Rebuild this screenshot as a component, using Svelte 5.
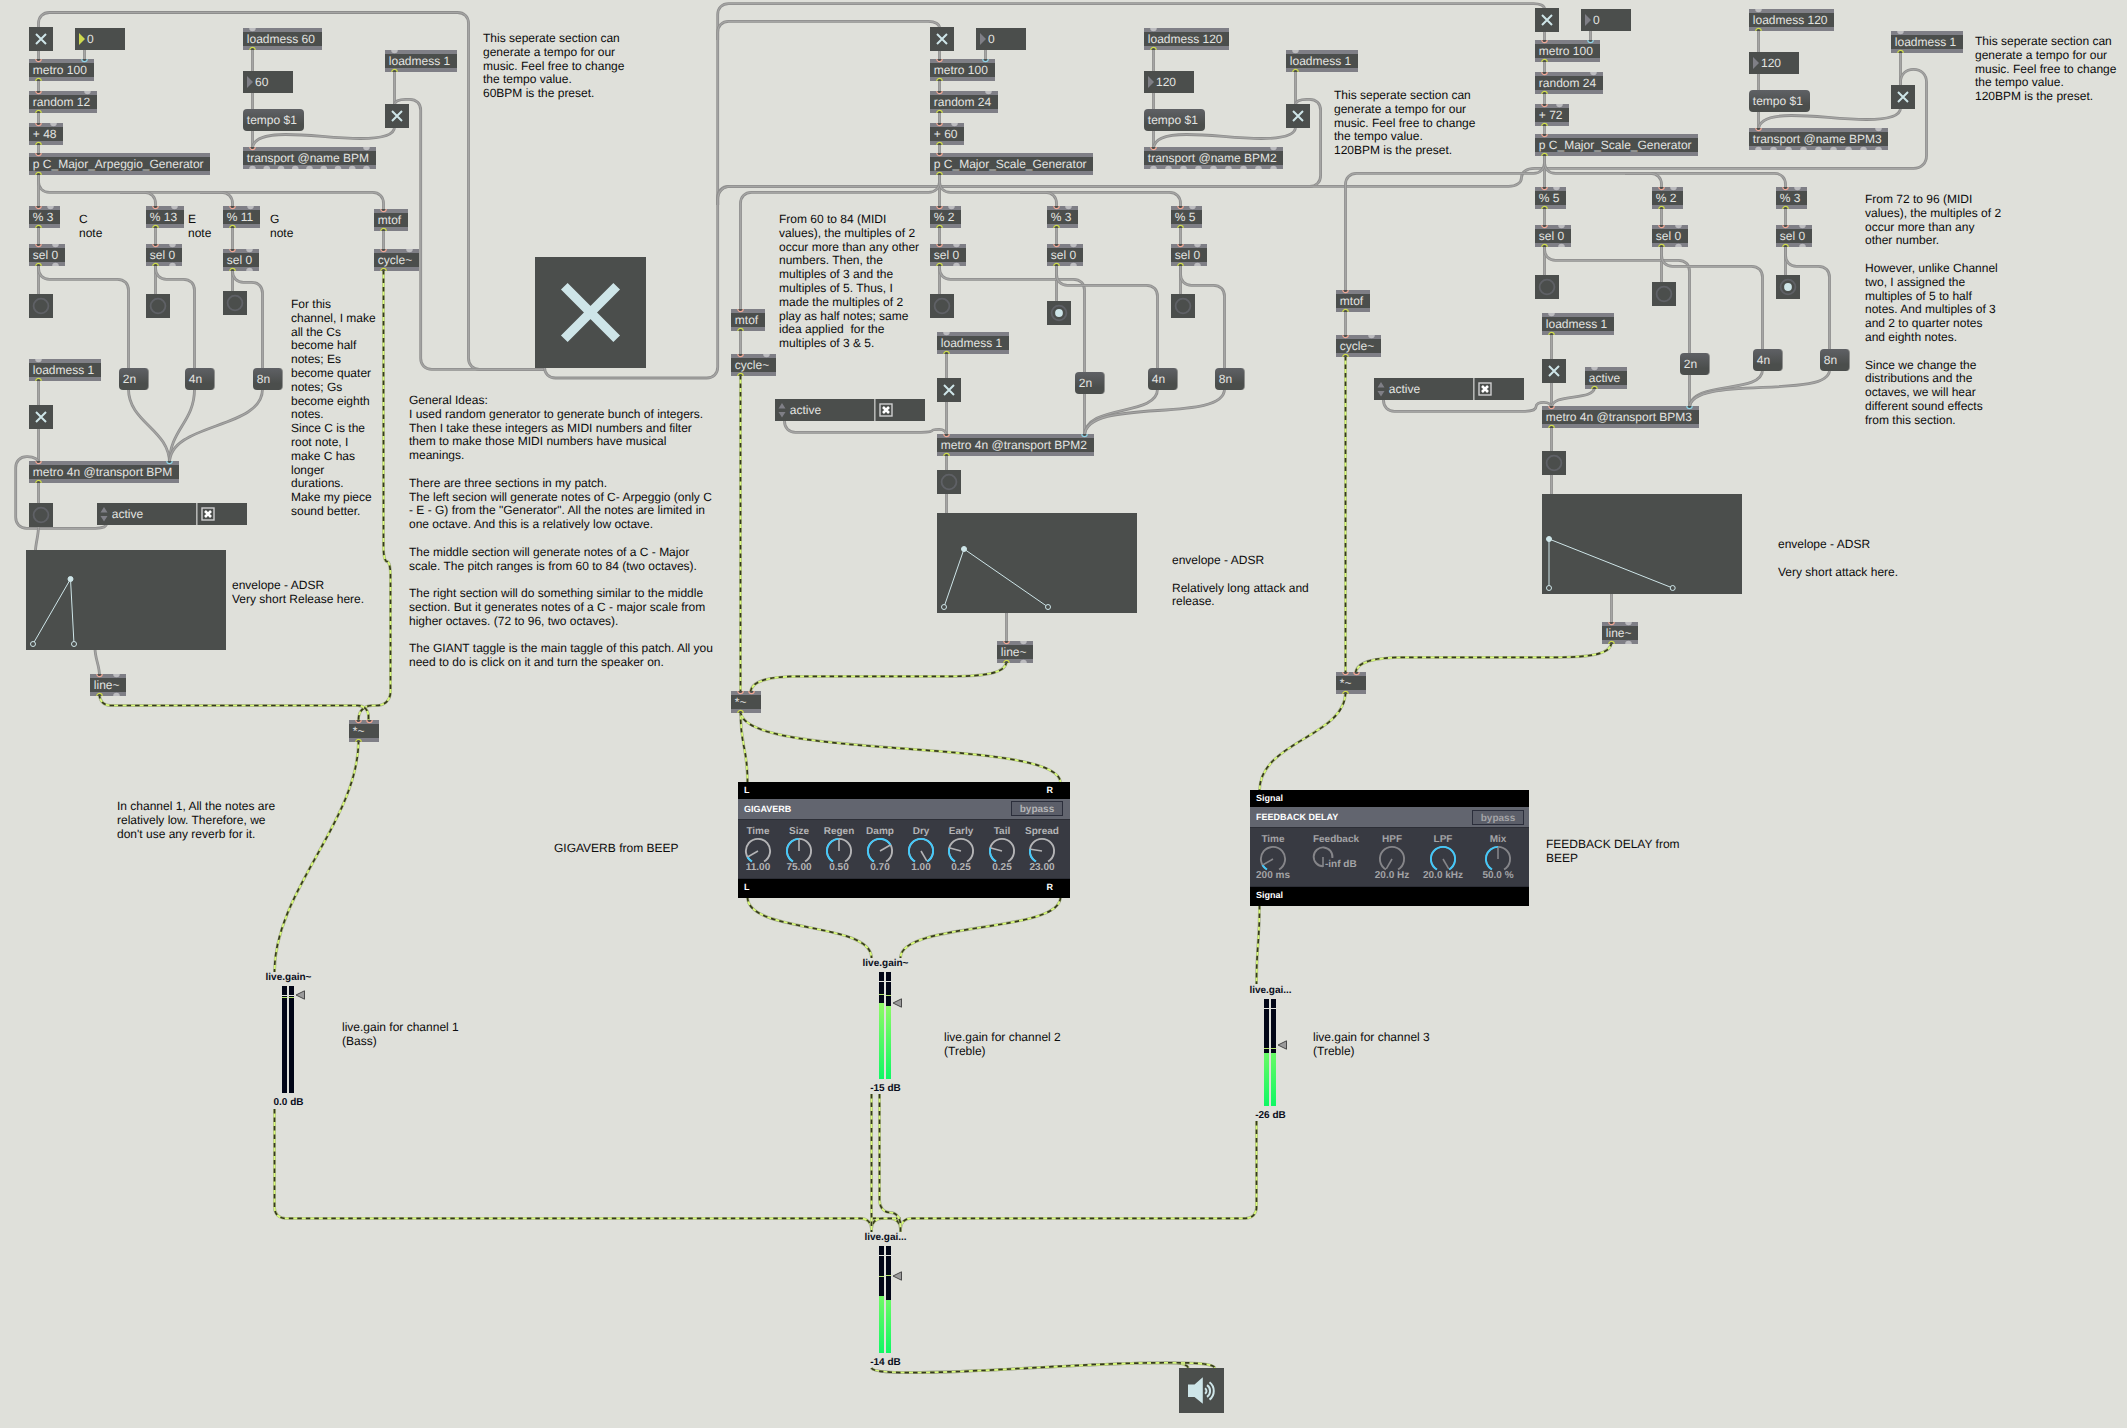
<script>
  // Patch cord: straight runs joined by rounded corners.
  function cord(points, radius = 11) {
    let d = `M${points[0][0]} ${points[0][1]}`;
    for (let k = 1; k < points.length - 1; k++) {
      const [ax, ay] = points[k - 1];
      const [bx, by] = points[k];
      const [cx, cy] = points[k + 1];
      const inLen = Math.hypot(bx - ax, by - ay);
      const outLen = Math.hypot(cx - bx, cy - by);
      const rin = Math.min(radius, k === 1 ? inLen : inLen / 2);
      const rout = Math.min(radius, k === points.length - 2 ? outLen : outLen / 2);
      const sx = bx - ((bx - ax) / inLen) * rin;
      const sy = by - ((by - ay) / inLen) * rin;
      const ex = bx + ((cx - bx) / outLen) * rout;
      const ey = by + ((cy - by) / outLen) * rout;
      const f = 0.6;
      d += ` L${sx} ${sy} C${sx + (bx - sx) * f} ${sy + (by - sy) * f} ${ex + (bx - ex) * f} ${ey + (by - ey) * f} ${ex} ${ey}`;
    }
    const last = points[points.length - 1];
    return d + ` L${last[0]} ${last[1]}`;
  }

  // Vertical S-shaped cord between an outlet and an inlet.
  function swing(x1, y1, x2, y2, a = 0.5, b = 0.5) {
    const h = y2 - y1;
    return `M${x1} ${y1} C${x1} ${y1 + h * a} ${x2} ${y2 - h * b} ${x2} ${y2}`;
  }

  const boxes = [];
  const toggles = [];
  const buttons = [];
  const numbers = [];
  const messages = [];
  const attrs = [];
  const cords = [];
  const signals = [];

  const box = (x, y, w, t, i, o) => boxes.push({ x, y, w, t, i, o });

  // The part every section shares: note generator plus tempo controls.
  function generator(x, y, name, nameW, range, offset) {
    toggles.push([x, y]);
    box(x, y + 32, 65, 'metro 100', 'rb', 'y');
    box(x, y + 64, 68, `random ${range}`, 'r.', 'y');
    box(x, y + 96, 34, `+ ${offset}`, 'r.', 'y');
    box(x, y + 126, nameW, name, 'r', 'y');
    cords.push(cord([[x + 9.5, y + 20], [x + 9.5, y + 130]]));
    cords.push(cord([[x + 55.5, y + 20], [x + 55.5, y + 34]]));
  }
  function tempo(x, y, load, loadW, bpm, bus, busW) {
    box(x, y, loadW, load, '.', 'y');
    numbers.push([x, y + 43, bpm, false]);
    messages.push([x, y + 81, 61, 'tempo $1']);
    box(x, y + 119, busW, `transport @name ${bus}`, 'r.', '.........');
    box(x + 142, y + 22, 72, 'loadmess 1', '.', 'y');
    toggles.push([x + 142, y + 76]);
    cords.push(cord([[x + 9.5, y + 20], [x + 9.5, y + 121]]));
    cords.push(cord([[x + 151.5, y + 42], [x + 151.5, y + 78]]));
    const a = x + 151.5;
    cords.push(
      `M${a} ${y + 99} C${a} ${y + 109} ${a - 18} ${y + 110.5} ${a - 34} ${y + 110.5} C${a - 62} ${y + 110.5} ${a - 82} ${y + 106.5} ${a - 109} ${y + 106.5} C${x + 25} ${y + 106.5} ${x + 9.5} ${y + 110} ${x + 9.5} ${y + 121}`
    );
  }
  function filter(x, y, t, w, selY, btnY, lit) {
    box(x, y, w, t, 'r.', 'y');
    box(x, selY, 36, 'sel 0', 'r.', 'y.');
    buttons.push([x, btnY, lit]);
    cords.push(cord([[x + 9.5, y + 20], [x + 9.5, btnY]]));
  }

  generator(29, 27, 'p C_Major_Arpeggio_Generator', 181, 12, 48);
  generator(930, 27, 'p C_Major_Scale_Generator', 163, 24, 60);
  generator(1535, 8, 'p C_Major_Scale_Generator', 163, 24, 72);
  numbers.push([75, 28, '0', true], [976, 28, '0', false], [1581, 9, '0', false]);
  tempo(243, 28, 'loadmess 60', 79, '60', 'BPM', 133);
  tempo(1144, 28, 'loadmess 120', 85, '120', 'BPM2', 139);
  tempo(1749, 9, 'loadmess 120', 85, '120', 'BPM3', 139);

  filter(29, 206, '% 3', 31, 244, 294, false);
  filter(146, 206, '% 13', 38, 244, 294, false);
  filter(223, 206, '% 11', 37, 249, 291, false);
  filter(930, 206, '% 2', 31, 244, 294, false);
  filter(1047, 206, '% 3', 31, 244, 301, true);
  filter(1171, 206, '% 5', 31, 244, 294, false);
  filter(1535, 187, '% 5', 31, 225, 275, false);
  filter(1652, 187, '% 2', 31, 225, 282, false);
  filter(1776, 187, '% 3', 31, 225, 275, true);

  box(374, 209, 34, 'mtof', 'r', 'y');
  box(374, 249, 45, 'cycle~', 'r.', 'y');
  box(731, 309, 34, 'mtof', 'r', 'y');
  box(731, 354, 45, 'cycle~', 'r.', 'y');
  box(1336, 290, 34, 'mtof', 'r', 'y');
  box(1336, 335, 45, 'cycle~', 'r.', 'y');

  box(29, 359, 72, 'loadmess 1', '.', 'y');
  box(29, 461, 150, 'metro 4n @transport BPM', 'rb', 'y');
  box(90, 674, 36, 'line~', 'r.', 'y.');
  box(349, 720, 30, '*~', 'rr', 'y');
  box(937, 332, 72, 'loadmess 1', '.', 'y');
  box(937, 434, 157, 'metro 4n @transport BPM2', 'rb', 'y');
  box(997, 641, 36, 'line~', 'r.', 'y.');
  box(731, 691, 30, '*~', 'rr', 'y');
  box(1542, 313, 72, 'loadmess 1', '.', 'y');
  box(1585, 367, 42, 'active', '.', 'y');
  box(1542, 406, 157, 'metro 4n @transport BPM3', 'rb', 'y');
  box(1602, 622, 36, 'line~', 'r.', 'y.');
  box(1336, 672, 30, '*~', 'rr', 'y');

  toggles.push([29, 405], [937, 378], [1542, 359]);
  buttons.push([29, 503, false], [937, 470, false], [1542, 451, false]);
  messages.push(
    [119, 368, 30, '2n'], [185, 368, 30, '4n'], [253, 368, 30, '8n'],
    [1075, 372, 30, '2n'], [1148, 368, 30, '4n'], [1215, 368, 30, '8n'],
    [1680, 353, 30, '2n'], [1753, 349, 30, '4n'], [1820, 349, 30, '8n']
  );
  attrs.push([97, 503], [775, 399], [1374, 378]);

  cords.push(
    // main toggle fan-out
    cord([[38.5, 28], [38.5, 12.5], [468.5, 12.5], [468.5, 369.3], [544, 369.3]]),
    cord([[394.5, 105], [394.5, 99.3], [420.7, 99.3], [420.7, 369.3], [544, 369.3]]),
    cord([[544.5, 366], [544.5, 378], [717.7, 378], [717.7, 3.6], [1544.5, 3.6], [1544.5, 9]]),
    cord([[717.7, 40], [717.7, 21.4], [939.5, 21.4], [939.5, 28]]),
    cord([[717.7, 205], [717.7, 186.4], [1320.6, 186.4], [1320.6, 99.3], [1295.5, 99.3], [1295.5, 105]]),
    cord([[717.7, 205], [717.7, 186.4], [1521.5, 186.4], [1521.5, 168.4], [1926.5, 168.4], [1926.5, 69.3], [1900.5, 69.3], [1900.5, 86]], 13),
    // generator outputs
    cord([[38.5, 173], [38.5, 192.4], [383.5, 192.4], [383.5, 211]]),
    cord([[120, 192.4], [155.5, 192.4], [155.5, 208]]),
    cord([[200, 192.4], [232.5, 192.4], [232.5, 208]]),
    cord([[38.5, 173], [38.5, 208]]),
    cord([[939.5, 173], [939.5, 208]]),
    cord([[939.5, 173], [939.5, 192.4], [740.5, 192.4], [740.5, 311]]),
    cord([[939.5, 173], [939.5, 192.4], [1180.5, 192.4], [1180.5, 208]]),
    cord([[1020, 192.4], [1056.5, 192.4], [1056.5, 208]]),
    cord([[1544.5, 154], [1544.5, 189]]),
    cord([[1544.5, 154], [1544.5, 173.4], [1345.5, 173.4], [1345.5, 292]]),
    cord([[1544.5, 154], [1544.5, 173.4], [1785.5, 173.4], [1785.5, 189]]),
    cord([[1625, 173.4], [1661.5, 173.4], [1661.5, 189]]),
    // matched notes to the duration messages
    cord([[38.5, 264], [38.5, 279.3], [128.5, 279.3], [128.5, 369]]),
    cord([[155.5, 264], [155.5, 279.3], [194.5, 279.3], [194.5, 369]]),
    cord([[232.5, 269], [232.5, 282.3], [262.5, 282.3], [262.5, 369]]),
    cord([[939.5, 264], [939.5, 279.3], [1084.5, 279.3], [1084.5, 436]]),
    cord([[1056.5, 264], [1056.5, 285.3], [1157.5, 285.3], [1157.5, 369]]),
    cord([[1180.5, 264], [1180.5, 285.3], [1224.5, 285.3], [1224.5, 369]]),
    cord([[1544.5, 245], [1544.5, 260.3], [1689.5, 260.3], [1689.5, 408]]),
    cord([[1661.5, 245], [1661.5, 266.3], [1762.5, 266.3], [1762.5, 350]]),
    cord([[1785.5, 245], [1785.5, 266.3], [1829.5, 266.3], [1829.5, 350]]),
    swing(128.5, 389, 169.5, 463, 0.45, 0.45),
    swing(194.5, 389, 169.5, 463, 0.45, 0.45),
    swing(262.5, 389, 169.5, 463, 0.55, 0.55),
    swing(1157.5, 389, 1084.5, 436, 0.6, 0.7),
    swing(1224.5, 389, 1084.5, 436, 0.75, 0.85),
    swing(1762.5, 370, 1689.5, 408, 0.65, 0.75),
    swing(1829.5, 370, 1689.5, 408, 0.8, 0.9),
    // mtof to cycle~
    cord([[383.5, 229], [383.5, 251]]),
    cord([[740.5, 329], [740.5, 356]]),
    cord([[1345.5, 310], [1345.5, 337]]),
    // rhythm columns
    cord([[38.5, 379], [38.5, 504]]),
    cord([[946.5, 352], [946.5, 514]]),
    cord([[1551.5, 333], [1551.5, 495]]),
    cord([[106.5, 524], [106.5, 528.3], [15.7, 528.3], [15.7, 456.7], [38.5, 456.7], [38.5, 463]]),
    cord([[784.5, 420], [784.5, 432.3], [932, 432.3], [932, 429.3], [946.5, 429.3], [946.5, 436]]),
    cord([[1383.5, 399], [1383.5, 411.3], [1536, 411.3], [1536, 402.3], [1551.5, 402.3], [1551.5, 408]]),
    'M1594.5 387 C1594.5 402 1551.5 392 1551.5 408',
    swing(38.5, 526, 35.5, 551, 0.4, 0.3),
    swing(95, 648, 99.5, 676, 0.4, 0.4),
    cord([[1006.5, 612], [1006.5, 643]]),
    cord([[1611.5, 593], [1611.5, 624]])
  );

  signals.push(
    cord([[383.5, 270], [383.5, 561.5], [390.5, 561.5], [390.5, 705.5], [358.5, 705.5], [358.5, 722]], 14),
    cord([[99.5, 694], [99.5, 705.5], [368.5, 705.5], [368.5, 722]]),
    cord([[740.5, 375], [740.5, 693]]),
    'M1006.5 661 C1006.5 672 990 676.3 950 676.3 H800 C768 676.3 750.5 681 750.5 693',
    cord([[1345.5, 356], [1345.5, 674]]),
    'M1611.5 642 C1611.5 653 1595 657.3 1555 657.3 H1405 C1373 657.3 1355.5 662 1355.5 674',
    swing(740.5, 711, 747.5, 783),
    swing(740.5, 711, 1060.5, 783, 0.7, 0.65),
    swing(1345.5, 692, 1259.5, 791, 0.45, 0.5),
    swing(358.5, 740, 274.5, 972, 0.35, 0.35),
    swing(747.5, 897, 871.5, 958, 0.6, 0.6),
    swing(1060.5, 897, 900.5, 958, 0.6, 0.6),
    swing(1259.5, 905, 1256.5, 984),
    cord([[274.5, 1109], [274.5, 1218.3], [871.5, 1218.3], [871.5, 1232]]),
    cord([[871.5, 1218.3], [900.5, 1218.3], [900.5, 1232]]),
    cord([[1256.5, 1121], [1256.5, 1218.3], [900.5, 1218.3], [900.5, 1232]]),
    cord([[900.5, 1218.3], [871.5, 1218.3], [871.5, 1232]]),
    cord([[871.5, 1094], [871.5, 1232]]),
    cord([[879.5, 1094], [879.5, 1212.5], [900.5, 1212.5], [900.5, 1232]], 13),
    'M871.5 1368 C874 1374 920 1373 960 1371.5 C1040 1368 1100 1363 1160 1362.8 C1176 1362.5 1186 1363 1188.5 1368',
    'M871.5 1368 C874 1374 920 1373 960 1371.5 C1040 1368 1100 1363 1160 1362.8 C1190 1362.5 1213 1363 1215 1368'
  );

  const envelopes = [
    { x: 26, y: 550, pts: [[7, 94], [44.5, 29], [48, 94]] },
    { x: 937, y: 513, pts: [[7, 94], [27, 36], [111, 94]] },
    { x: 1542, y: 494, pts: [[7, 94], [7, 45], [130.7, 94]] }
  ];

  // x and first baseline of each comment
  const comments = [
    [483, 42, 'This seperate section can\ngenerate a tempo for our\nmusic. Feel free to change\nthe tempo value.\n60BPM is the preset.'],
    [1334, 99, 'This seperate section can\ngenerate a tempo for our\nmusic. Feel free to change\nthe tempo value.\n120BPM is the preset.'],
    [1975, 45, 'This seperate section can\ngenerate a tempo for our\nmusic. Feel free to change\nthe tempo value.\n120BPM is the preset.'],
    [79, 223, 'C\nnote'],
    [188, 223, 'E\nnote'],
    [270, 223, 'G\nnote'],
    [291, 308, 'For this\nchannel, I make\nall the Cs\nbecome half\nnotes; Es\nbecome quater\nnotes; Gs\nbecome eighth\nnotes.\nSince C is the\nroot note, I\nmake C has\nlonger\ndurations.\nMake my piece\nsound better.'],
    [409, 404, 'General Ideas:\nI used random generator to generate bunch of integers.\nThen I take these integers as MIDI numbers and filter\nthem to make those MIDI numbers have musical\nmeanings.\n\nThere are three sections in my patch.\nThe left secion will generate notes of C- Arpeggio (only C\n- E - G) from the "Generator". All the notes are limited in\none octave. And this is a relatively low octave.\n\nThe middle section will generate notes of a C - Major\nscale. The pitch ranges is from 60 to 84 (two octaves).\n\nThe right section will do something similar to the middle\nsection. But it generates notes of a C - major scale from\nhigher octaves. (72 to 96, two octaves).\n\nThe GIANT taggle is the main taggle of this patch. All you\nneed to do is click on it and turn the speaker on.'],
    [779, 223, 'From 60 to 84 (MIDI\nvalues), the multiples of 2\noccur more than any other\nnumbers. Then, the\nmultiples of 3 and the\nmultiples of 5. Thus, I\nmade the multiples of 2\nplay as half notes; same\nidea applied  for the\nmultiples of 3 & 5.'],
    [1865, 203, 'From 72 to 96 (MIDI\nvalues), the multiples of 2\noccur more than any\nother number.\n\nHowever, unlike Channel\ntwo, I assigned the\nmultiples of 5 to half\nnotes. And multiples of 3\nand 2 to quarter notes\nand eighth notes.\n\nSince we change the\ndistributions and the\noctaves, we will hear\ndifferent sound effects\nfrom this section.'],
    [232, 589, 'envelope - ADSR\nVery short Release here.'],
    [1172, 564, 'envelope - ADSR\n\nRelatively long attack and\nrelease.'],
    [1778, 548, 'envelope - ADSR\n\nVery short attack here.'],
    [117, 810, "In channel 1, All the notes are\nrelatively low. Therefore, we\ndon't use any reverb for it."],
    [554, 852, 'GIGAVERB from BEEP'],
    [1546, 848, 'FEEDBACK DELAY from\nBEEP'],
    [342, 1031, 'live.gain for channel 1\n(Bass)'],
    [944, 1041, 'live.gain for channel 2\n(Treble)'],
    [1313, 1041, 'live.gain for channel 3\n(Treble)']
  ];

  // x of left bar, top of bars, peak and level offsets per bar
  const gains = [
    { x: 282, y: 986, name: 'live.gain~', db: '0.0 dB', tri: 9, peak: [11, 11], level: [107, 107] },
    { x: 879, y: 972, name: 'live.gain~', db: '-15 dB', tri: 31, peak: [22, 23], level: [31, 34] },
    { x: 1264, y: 999, name: 'live.gai...', db: '-26 dB', tri: 46, peak: [49, 49], level: [54, 54] },
    { x: 879, y: 1246, name: 'live.gai...', db: '-14 dB', tri: 30, peak: [30, 29], level: [50, 54] }
  ];

  const modules = [
    {
      x: 738, y: 782, w: 332, title: 'GIGAVERB', left: 'L', right: 'R', tone: 'bright', by: 273, byY: 19,
      dials: [
        ['Time', '11.00', 20, 0.1], ['Size', '75.00', 61, 0.5], ['Regen', '0.50', 101, 0.5], ['Damp', '0.70', 142, 0.7],
        ['Dry', '1.00', 183, 1], ['Early', '0.25', 223, 0.25], ['Tail', '0.25', 264, 0.25], ['Spread', '23.00', 304, 0.23]
      ]
    },
    {
      x: 1250, y: 790, w: 279, title: 'FEEDBACK DELAY', left: 'Signal', right: '', tone: 'dim', by: 222, byY: 20,
      dials: [
        ['Time', '200 ms', 23, 0.1], ['HPF', '20.0 Hz', 142, 0], ['LPF', '20.0 kHz', 193, 1], ['Mix', '50.0 %', 248, 0.5]
      ]
    }
  ];

  // Point on a dial; the sweep is 300 degrees, starting 30 degrees left of straight down.
  function at(cx, cy, r, v) {
    const a = ((120 + 300 * v) * Math.PI) / 180;
    return [cx + r * Math.cos(a), cy + r * Math.sin(a)];
  }
  function arc(cx, cy, r, from, to) {
    const [x1, y1] = at(cx, cy, r, from);
    const [x2, y2] = at(cx, cy, r, to);
    return `M${x1} ${y1} A${r} ${r} 0 ${(to - from) * 300 > 180 ? 1 : 0} 1 ${x2} ${y2}`;
  }
  const portX = (n, k, w) => (n === 1 ? 9.5 : 9.5 + (k * (w - 19)) / (n - 1));
</script>

<main class="patcher">
  <svg class="cords" width="2127" height="1428" viewBox="0 0 2127 1428">
    {#each cords as d}
      <path class="cord-edge" {d} />
      <path class="cord-core" {d} />
    {/each}
    {#each signals as d}
      <path class="sig-edge" {d} />
      <path class="sig-core" {d} />
      <path class="sig-dash" {d} />
    {/each}
  </svg>

  {#each comments as [x, y, text]}
    <p class="comment" style:left="{x}px" style:top="{y - 10}px">{text}</p>
  {/each}

  {#each boxes as b}
    <div class="box" style:left="{b.x}px" style:top="{b.y}px" style:width="{b.w}px">
      <span>{b.t}</span>
      <svg class="ports" width={b.w} height="22">
        {#each b.i.split('') as p, k}
          {@const px = portX(b.i.length, k, b.w)}
          {#if p === '.'}
            <path class="free" d="M{px - 3.3} 0 A3.3 3.3 0 0 0 {px + 3.3} 0 Z" />
          {:else}
            <path class="used {p}" d="M{px - 2.7} 0 A2.7 2.7 0 0 0 {px + 2.7} 0" />
          {/if}
        {/each}
        {#each b.o.split('') as p, k}
          {@const px = portX(b.o.length, k, b.w)}
          {#if p === '.'}
            <path class="free" d="M{px - 3.3} 22 A3.3 3.3 0 0 1 {px + 3.3} 22 Z" />
          {:else}
            <path class="used {p}" d="M{px - 2.7} 22 A2.7 2.7 0 0 1 {px + 2.7} 22" />
          {/if}
        {/each}
      </svg>
    </div>
  {/each}

  {#each toggles as [x, y]}
    <svg class="node" style:left="{x}px" style:top="{y}px" width="24" height="24">
      <path class="x" d="M7 7 L17 17 M17 7 L7 17" />
    </svg>
  {/each}

  <svg class="node" style:left="535px" style:top="257px" width="111" height="111">
    <path class="x giant" d="M29.3 29.3 L81.7 81.7 M81.7 29.3 L29.3 81.7" />
  </svg>

  {#each buttons as [x, y, lit]}
    <svg class="node" style:left="{x}px" style:top="{y}px" width="24" height="24">
      <circle class="ring" cx="12" cy="12" r="7.4" />
      {#if lit}<circle class="lamp" cx="12" cy="12" r="3.9" />{/if}
    </svg>
  {/each}

  {#each numbers as [x, y, value, active]}
    <div class="number" style:left="{x}px" style:top="{y}px">
      <svg width="6" height="12"><path class:active d="M0 0 L6 6 L0 12 Z" /></svg>
      <span>{value}</span>
    </div>
  {/each}

  {#each messages as [x, y, w, text]}
    <div class="message" class:short={w === 30} style:left="{x}px" style:top="{y}px" style:width="{w}px">{text}</div>
  {/each}

  {#each attrs as [x, y]}
    <div class="attr" style:left="{x}px" style:top="{y}px">
      <svg width="150" height="22">
        <path class="arrow" d="M3.5 9.5 L7 4 L10.5 9.5 Z M3.5 13 L7 18.5 L10.5 13 Z" />
        <rect class="divider" x="99" y="0" width="1.6" height="22" />
        <rect class="check" x="105" y="5" width="12" height="12" />
        <path class="tick" d="M108 8 L114 14 M114 8 L108 14" />
      </svg>
      <span>active</span>
    </div>
  {/each}

  {#each envelopes as e}
    <svg class="node" style:left="{e.x}px" style:top="{e.y}px" width="200" height="100">
      <polyline class="env" points={e.pts.map((p) => p.join(',')).join(' ')} />
      {#each e.pts as [px, py], k}
        <circle class="handle" class:solid={k === 1} cx={px} cy={py} r="2.5" />
      {/each}
    </svg>
  {/each}

  {#each modules as m}
    <section class="module {m.tone}" style:left="{m.x}px" style:top="{m.y}px" style:width="{m.w}px">
      <header class="io"><span>{m.left}</span><span class="right">{m.right}</span></header>
      <div class="title">{m.title}</div>
      <div class="panel"></div>
      <footer class="io"><span>{m.left}</span><span class="right">{m.right}</span></footer>
      <svg class="face" width={m.w} height="116">
        <rect class="bypass" x={m.by + 0.5} y={m.byY + 0.5} width="51" height="14" />
        <text x={m.by + 26} y={m.byY + 11}>bypass</text>
        {#each m.dials as [name, value, cx, v]}
          {@const cy = 69}
          {@const tip = at(cx, cy, 11.5, v)}
          <text x={cx} y="52">{name}</text>
          <path class="track" d={arc(cx, cy, 12.1, 0, 1)} />
          {#if v > 0}<path class="value" d={arc(cx, cy, 12.1, 0, v)} />{/if}
          <line class="needle" x1={cx} y1={cy} x2={tip[0]} y2={tip[1]} />
          <text x={cx} y="88">{value}</text>
        {/each}
        {#if m.tone === 'dim'}
          <text x="86" y="52">Feedback</text>
          <path class="track" d="M73 76.2 A9.4 9.4 0 1 1 82.4 68" />
          <line class="needle" x1="73" y1="67" x2="73" y2="77" />
          <text class="start" x="75" y="77">-inf dB</text>
        {/if}
      </svg>
    </section>
  {/each}

  {#each gains as g}
    <div class="gain" style:left="{g.x - 34}px" style:top="{g.y - 15}px">
      <span class="name">{g.name}</span>
      <svg width="80" height="107">
        {#each [34, 41] as bx, k}
          <rect class="bar" x={bx} y="0" width="5" height="107" />
          <rect x={bx} y={g.level[k]} width="5" height={107 - g.level[k]} fill="url(#level)" />
          <rect class="zero" x={bx} y="9" width="5" height="1" />
          <rect class="peak" x={bx} y={g.peak[k]} width="5" height="1" />
        {/each}
        <path class="fader" d="M48 {g.tri} L56.5 {g.tri - 4.2} V{g.tri + 4.2} Z" />
      </svg>
      <span class="db">{g.db}</span>
    </div>
  {/each}

  <svg class="node" style:left="1179px" style:top="1368px" width="45" height="45">
    <path class="horn" d="M9 16.5 H15.5 L23.8 9.3 V35.7 L15.5 29 H9 Z" />
    <path class="wave" d="M26 20.2 A3.4 3.4 0 0 1 26 25.8 M28 17.2 A7 7 0 0 1 28 28.8 M30.5 14.2 A11 11 0 0 1 30.5 31.6" />
  </svg>

  <svg class="defs" width="0" height="0">
    <linearGradient id="level" gradientUnits="userSpaceOnUse" x1="0" y1="30" x2="0" y2="107">
      <stop offset="0" stop-color="#92fa66" />
      <stop offset="1" stop-color="#0ff864" />
    </linearGradient>
  </svg>
</main>

<style>
  :global(body) {
    margin: 0;
    background: #dfe0da;
  }
  .patcher {
    position: relative;
    width: 2127px;
    height: 1428px;
    overflow: hidden;
    background: #dfe0da;
    font-family: 'Liberation Sans', Arial, sans-serif;
    font-size: 12px;
    line-height: 14px;
    text-rendering: geometricPrecision;
    color: #0c0c0c;
  }
  .cords,
  .comment,
  .box,
  .node,
  .number,
  .message,
  .attr,
  .module,
  .gain,
  .defs {
    position: absolute;
  }
  .cords {
    left: 0;
    top: 0;
  }
  .cords path {
    fill: none;
  }
  .cord-edge {
    stroke: #8e8e8d;
    stroke-width: 2.8;
  }
  .cord-core {
    stroke: #a5a5a4;
    stroke-width: 1.2;
  }
  .sig-edge {
    stroke: #a5ab90;
    stroke-width: 2.8;
  }
  .sig-core {
    stroke: #d9fb77;
    stroke-width: 1.7;
  }
  .sig-dash {
    stroke: #35381f;
    stroke-width: 1.7;
    stroke-dasharray: 4.5 4;
  }
  .comment {
    margin: 0;
    white-space: pre;
    line-height: 13.8px;
  }
  .box {
    box-sizing: border-box;
    height: 22px;
    border-top: 4px solid #7f7f86;
    border-bottom: 4px solid #7f7f86;
    background: #4b4e4c;
    color: #e3e4e1;
    white-space: pre;
  }
  .box span {
    display: block;
    margin-left: 3.8px;
  }
  .ports {
    position: absolute;
    left: 0;
    top: -4px;
  }
  .free {
    fill: #bdbdc0;
  }
  .used {
    fill: #4b4e4c;
    stroke-width: 1.2;
  }
  .used.r {
    stroke: #f0a896;
  }
  .used.b {
    stroke: #8fd3e6;
  }
  .used.y {
    stroke: #cfdc4e;
  }
  .node {
    display: block;
    background: #4b4e4c;
  }
  .x {
    stroke: #cee5e8;
    stroke-width: 2;
  }
  .x.giant {
    stroke-width: 9.4;
  }
  .ring {
    fill: none;
    stroke: #5f6166;
    stroke-width: 1.8;
  }
  .lamp {
    fill: #cee5e8;
  }
  .number {
    display: flex;
    align-items: center;
    box-sizing: border-box;
    width: 50px;
    height: 22px;
    padding-left: 4px;
    gap: 2px;
    background: #4b4e4c;
    color: #e3e4e1;
  }
  .number path {
    fill: #7f7f86;
  }
  .number path.active {
    fill: #ced94f;
  }
  .message {
    box-sizing: border-box;
    height: 22px;
    padding: 4px 0 0 3.8px;
    border-radius: 4px;
    background: linear-gradient(#5f6165, #4b4e4c 70%);
    color: #e3e4e1;
    white-space: pre;
  }
  .message.short {
    border-right: 1px solid #8f908e;
  }
  .attr {
    display: flex;
    width: 150px;
    height: 22px;
    background: #4b4e4c;
    color: #e3e4e1;
  }
  .attr svg {
    flex: none;
  }
  .attr span {
    margin: 4px 0 0 -135.2px;
  }
  .arrow {
    fill: #7f7f86;
  }
  .divider {
    fill: #b4b5b3;
  }
  .check {
    fill: none;
    stroke: #cfcfd0;
    stroke-width: 1.4;
  }
  .tick {
    stroke: #fff;
    stroke-width: 2.6;
  }
  .env {
    fill: none;
    stroke: #cee5e8;
    stroke-width: 1;
  }
  .handle {
    fill: #4b4e4c;
    stroke: #cee5e8;
    stroke-width: 1;
  }
  .handle.solid {
    fill: #cee5e8;
  }
  .module {
    height: 116px;
    font-size: 9px;
    font-weight: bold;
    line-height: 10px;
    color: #fff;
  }
  .io {
    display: flex;
    justify-content: space-between;
    box-sizing: border-box;
    height: 17px;
    padding: 3px 17px 0 6px;
    background: #000;
  }
  footer.io {
    height: 19px;
  }
  .title {
    box-sizing: border-box;
    height: 20px;
    padding: 5px 0 0 6px;
    background: #62656f;
  }
  .panel {
    box-sizing: border-box;
    height: 60px;
    border-top: 1px solid #2c2e36;
    border-bottom: 1px solid #2c2e36;
    background: #383a42;
  }
  .face {
    position: absolute;
    left: 0;
    top: 0;
    font-size: 10px;
  }
  .face text {
    fill: #b3b3b5;
    text-anchor: middle;
  }
  .dim .face text {
    fill: #a3a3a6;
  }
  .face text.start {
    text-anchor: start;
  }
  .bypass {
    fill: #5b5e69;
    stroke: #2b2e3b;
  }
  .track,
  .value {
    fill: none;
    stroke: #b4b4b6;
    stroke-width: 1.9;
  }
  .needle {
    stroke: #b4b4b6;
    stroke-width: 1.6;
  }
  .dim .track,
  .dim .needle {
    stroke: #858589;
  }
  .value,
  .dim .value {
    stroke: #41c9fb;
  }
  .gain {
    display: flex;
    flex-direction: column;
    align-items: center;
    width: 80px;
    font-size: 10px;
    font-weight: bold;
    line-height: 12px;
    color: #0a0e20;
  }
  .gain .name {
    box-sizing: border-box;
    width: 80px;
    height: 15px;
    padding-left: 1px;
    text-align: center;
    line-height: 14px;
  }
  .gain .db {
    box-sizing: border-box;
    width: 80px;
    margin-top: 3px;
    padding-left: 1px;
    text-align: center;
    line-height: 14px;
  }
  .bar {
    fill: #020617;
  }
  .zero {
    fill: #e4e5df;
  }
  .peak {
    fill: #b4e86a;
  }
  .fader {
    fill: #9b9b9b;
    stroke: #4a4a4a;
    stroke-width: 1;
  }
  .horn {
    fill: #cee5e8;
  }
  .wave {
    fill: none;
    stroke: #cee5e8;
    stroke-width: 2;
  }
</style>
